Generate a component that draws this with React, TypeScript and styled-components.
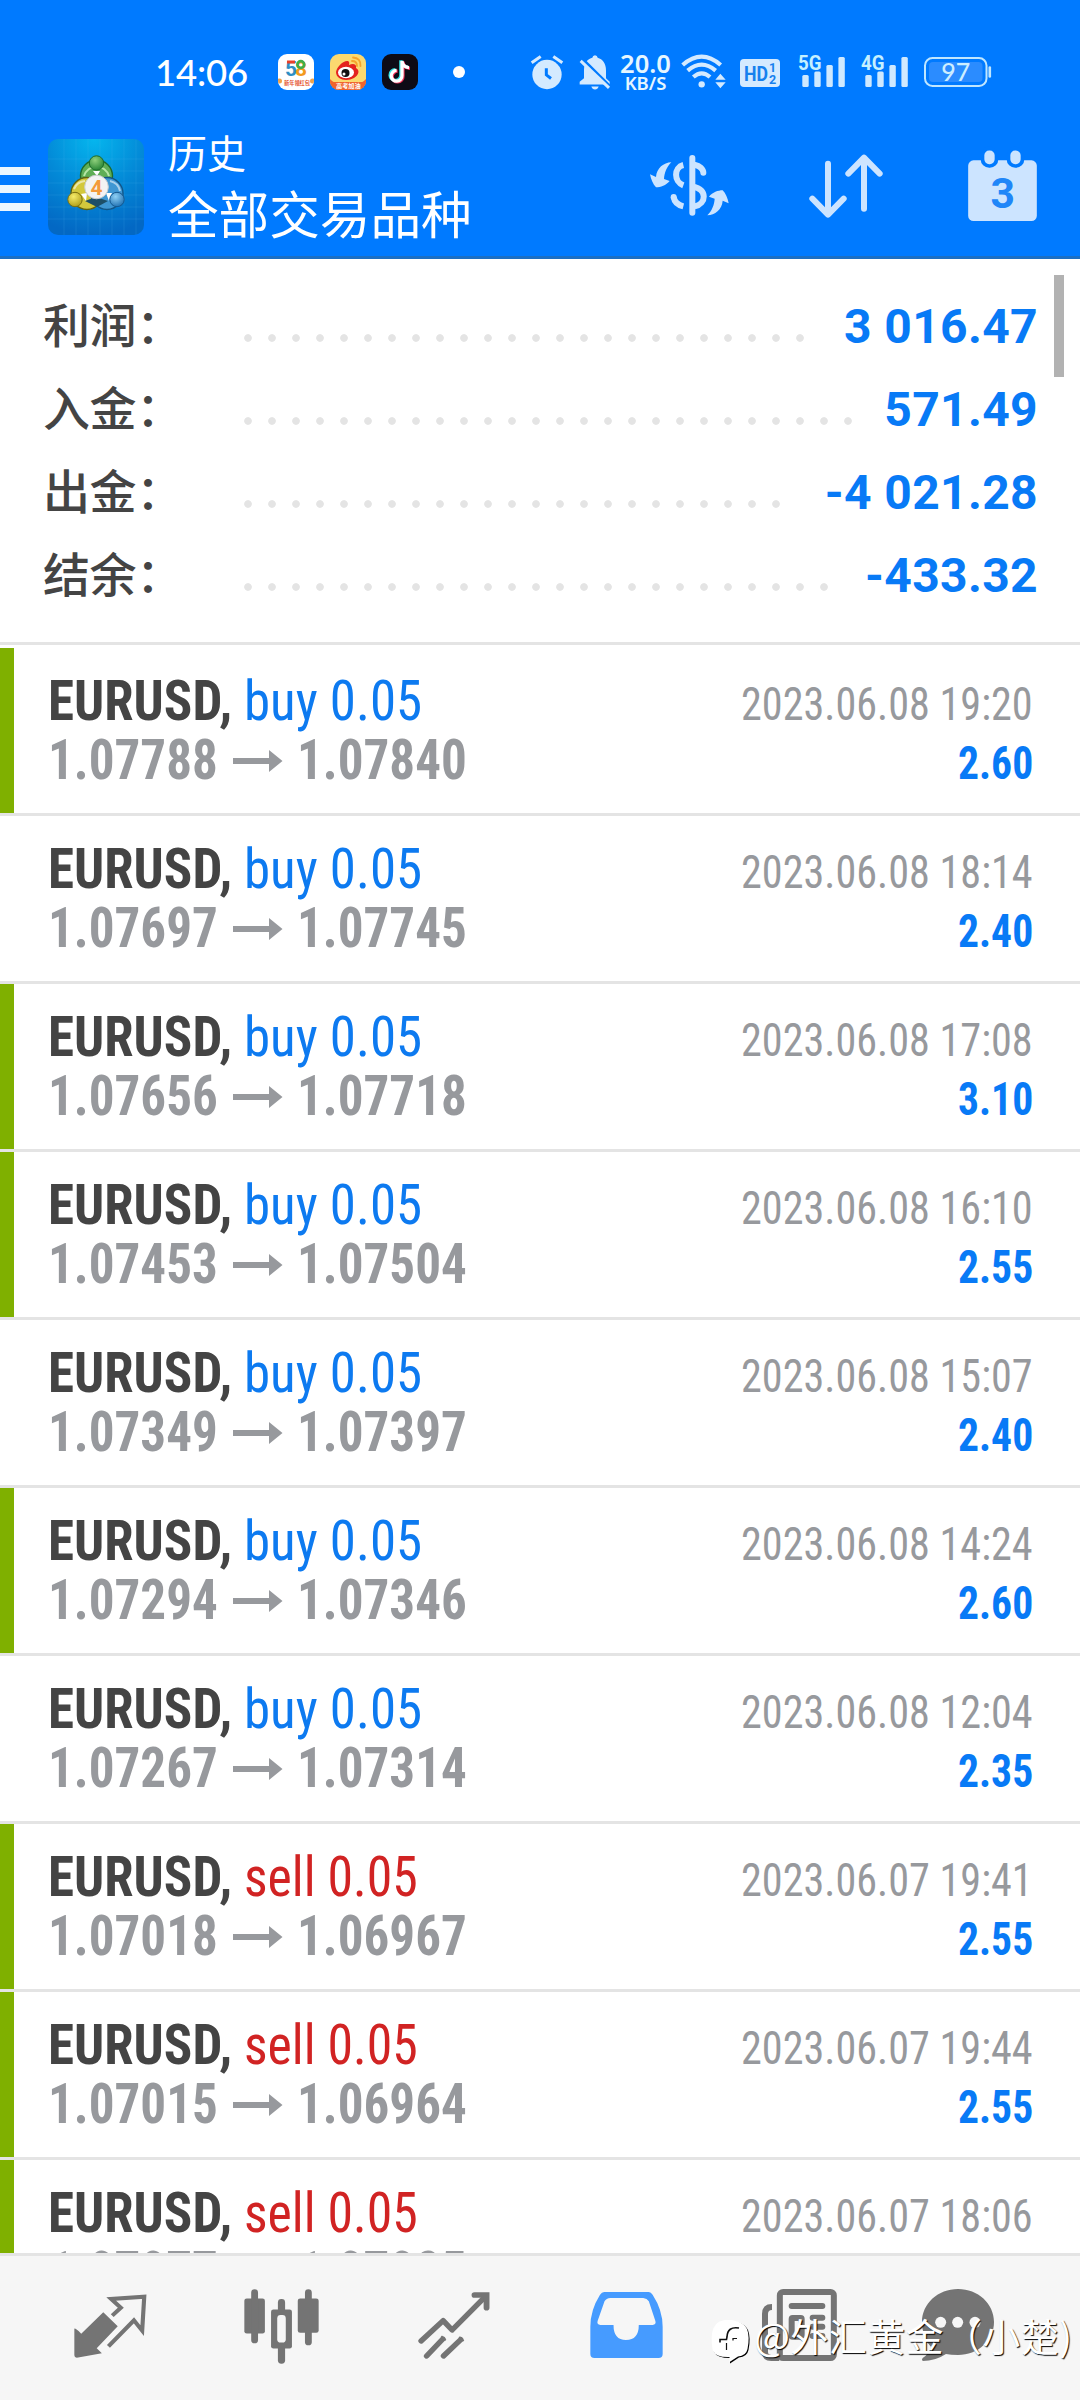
import React, { useLayoutEffect, useRef, useState } from "react";
import styled, { createGlobalStyle } from "styled-components";

const GlobalStyle = createGlobalStyle`
  * { box-sizing: border-box; }
  body { margin: 0; background: #fff; }
  svg { display: block; flex: none; overflow: visible; }
`;

const cjk = `"Noto Sans CJK SC", sans-serif`;
const roboto = `Roboto, "Noto Sans CJK SC", sans-serif`;
const condensed = `"Roboto Condensed", Roboto, sans-serif`;

const Screen = styled.main`
  position: relative;
  width: 1080px;
  height: 2400px;
  overflow: hidden;
  display: flex;
  flex-direction: column;
  background: #fff;
  font-family: ${roboto};
`;

const Header = styled.header`
  flex: none;
  height: 259px;
  background: #007aff;
  border-bottom: 3px solid #1b6fc4;
  color: #fff;
`;

/* ---------- status bar ---------- */

const StatusBar = styled.div`
  height: 120px;
  padding: 54px 0 0 155px;
  display: flex;
  align-items: flex-start;
`;

const Clock = styled.span`
  width: 123px;
  font: 500 36.5px/37px Lato, sans-serif;
  letter-spacing: -0.2px;
`;

const StatusItem = styled.div<{ $gap: number; $top?: number }>`
  flex: none;
  margin-left: ${(p) => p.$gap}px;
  margin-top: ${(p) => p.$top ?? 0}px;
`;

const AppTile = styled.div<{ $bg: string }>`
  width: 36px;
  height: 36px;
  border-radius: 9px;
  overflow: hidden;
  background: ${(p) => p.$bg};
`;

const Dot = styled.div`
  width: 12px;
  height: 12px;
  border-radius: 50%;
  background: #fff;
`;

const Speed = styled.div`
  width: 51px;
  display: flex;
  flex-direction: column;
  align-items: center;
  color: #e6f6ff;
  font: 600 25.5px/19px "Noto Sans", sans-serif;
  white-space: nowrap;
`;

const SpeedUnit = styled.div`
  font-size: 18.5px;
  line-height: 19px;
`;

/* ---------- toolbar ---------- */

const Toolbar = styled.div`
  height: 136px;
  display: flex;
  align-items: flex-start;
`;

const Hamburger = styled.div`
  width: 30px;
  margin-top: 47px;
  display: flex;
  flex-direction: column;
  gap: 10px;
`;

const HamburgerLine = styled.i`
  height: 8px;
  background: #ebf6ff;
`;

const Logo = styled.div`
  flex: none;
  width: 96px;
  height: 96px;
  margin: 19px 0 0 18px;
  border-radius: 10px;
  overflow: hidden;
`;

const Titles = styled.div`
  width: 480px;
  margin-left: 24px;
  padding-top: 3px;
  font-family: ${cjk};
`;

const Caption = styled.div`
  font-size: 39px;
  line-height: 56px;
`;

const Title = styled.div`
  font-size: 50.6px;
  line-height: 67px;
`;

const ToolIcon = styled.div<{ $gap: number; $top: number }>`
  flex: none;
  margin-left: ${(p) => p.$gap}px;
  margin-top: ${(p) => p.$top}px;
`;

/* ---------- summary ---------- */

const Summary = styled.section`
  flex: none;
  position: relative;
  height: 386px;
  padding: 26px 42px 0 43px;
  border-bottom: 3px solid #e4e4e4;
`;

const SummaryRow = styled.div`
  height: 83px;
  display: flex;
  align-items: center;
`;

const SummaryLabel = styled.span`
  width: 193px;
  padding-bottom: 7px;
  font: 500 47px/76px ${cjk};
  letter-spacing: -0.4px;
  color: #444;
`;

const Leader = styled.span<{ $count: number }>`
  width: ${(p) => p.$count * 24}px;
  height: 24px;
  margin-top: 23px;
  background: radial-gradient(circle at center, #e4e4e4 3.4px, transparent 4.2px) 0 0 / 24px 24px;
`;

const SummaryValue = styled.span`
  margin-left: auto;
  font: 700 48px/83px ${roboto};
  letter-spacing: 0.35px;
  color: #087af6;
`;

const ScrollThumb = styled.i`
  position: absolute;
  right: 16px;
  top: 16px;
  width: 10px;
  height: 102px;
  background: #b2b2b2;
`;

/* ---------- deals ---------- */

const DealList = styled.section`
  flex: 1;
  min-height: 0;
  overflow: hidden;
  padding-top: 3px;
`;

const DealRow = styled.article`
  height: 168px;
  display: flex;
  border-bottom: 3px solid #e4e4e4;
`;

const Marker = styled.i<{ $on: boolean }>`
  flex: none;
  width: 14px;
  background: ${(p) => (p.$on ? "#7fb000" : "transparent")};
`;

const DealMain = styled.div`
  flex: 1;
  padding: 24px 0 0 34px;
`;

const DealSide = styled.div`
  padding: 24px 47.4px 0 0;
  display: flex;
  flex-direction: column;
  align-items: flex-end;
`;

const Line = styled.div`
  height: 59px;
  display: flex;
  font: 400 55px/59px ${condensed};
`;

const Slot = styled.span<{ $w: number; $gap?: number }>`
  display: block;
  flex: none;
  width: ${(p) => p.$w}px;
  margin-left: ${(p) => p.$gap ?? 0}px;
`;

const Inner = styled.span`
  display: inline-block;
  white-space: nowrap;
  transform-origin: 0 50%;
`;

const Symbol = styled(Inner)`
  font-weight: 700;
  color: #444;
`;

const Order = styled(Inner)<{ $sell?: boolean }>`
  color: ${(p) => (p.$sell ? "#d12323" : "#0d7af0")};
`;

const Price = styled(Inner)`
  font-weight: 700;
  color: #97999d;
`;

const DateText = styled(Inner)`
  font-size: 45.5px;
  color: #97999d;
`;

const Profit = styled(Inner)`
  font-size: 45.5px;
  font-weight: 700;
  color: #087af6;
`;

const ArrowSvg = styled.svg`
  margin: 14px 0 0 15px;
`;

/* Squeezes a line of text horizontally so that it fills its slot. */
function Fit({
  as: Text,
  width,
  gap,
  children,
  ...rest
}: {
  as: React.ElementType;
  width: number;
  gap?: number;
  children: React.ReactNode;
  [key: string]: unknown;
}) {
  const ref = useRef<HTMLSpanElement>(null);
  const [scale, setScale] = useState(1);
  useLayoutEffect(() => {
    if (ref.current) setScale(width / ref.current.offsetWidth);
  }, [width]);
  return (
    <Slot $w={width} $gap={gap}>
      <Text ref={ref} style={{ transform: `scaleX(${scale})` }} {...rest}>
        {children}
      </Text>
    </Slot>
  );
}

/* ---------- bottom bar ---------- */

const BottomBar = styled.nav`
  flex: none;
  height: 147px;
  padding-left: 74px;
  display: flex;
  align-items: flex-start;
  background: #f6f6f6;
  border-top: 3px solid #e4e4e4;
`;

const NavItem = styled.div<{ $gap: number; $top: number }>`
  flex: none;
  margin-left: ${(p) => p.$gap}px;
  margin-top: ${(p) => p.$top}px;
`;

const Watermark = styled.div`
  position: absolute;
  left: 711px;
  top: 2310px;
  display: flex;
  white-space: nowrap;
  color: #fff;
  font: 400 38px/50px ${cjk};
  letter-spacing: 0.4px;
  text-shadow: 1px 1px 1px #000;
`;

const WatermarkLogo = styled.svg`
  margin: 10px 4px 0 0;
`;

/* ---------- drawings ---------- */

const pale = "#d4eaff";
const grey = "#747474";

const Tile58 = () => (
  <svg width="36" height="36" viewBox="0 0 36 36">
    <g fontFamily="Roboto, sans-serif" fontWeight="700" fontSize="21">
      <text x="7" y="22" fill="#2f8fc4">5</text>
      <text x="17" y="22" fill="#f39a1d">8</text>
    </g>
    <path d="M9 8H17" stroke="#e8402a" strokeWidth="3" />
    <circle cx="22.8" cy="10.5" r="3.4" fill="none" stroke="#3fae49" strokeWidth="2.6" />
    <text x="6" y="30.5" fontFamily="Noto Sans CJK SC, sans-serif" fontWeight="700" fontSize="5.2" fill="#e5502c">
      新年领红包
    </text>
    <circle cx="1.5" cy="27" r="2.5" fill="#f0a24a" />
    <circle cx="34.5" cy="27" r="2.5" fill="#f0a24a" />
  </svg>
);

const TileWeibo = () => (
  <svg width="36" height="36" viewBox="0 0 36 36">
    <rect y="28" width="36" height="8" fill="#f0642d" />
    <path d="M0 36V25Q4 30 10 28H26Q32 30 36 25V36Z" fill="#f0642d" />
    <path d="M6 18C7 12 14 6 18 7C20 8 19 10 19 11C23 9 27 10 26 14C30 16 29 21 24 24C17 28 6 26 6 18Z" fill="#e4231f" />
    <ellipse cx="16" cy="18.5" rx="8" ry="5.8" fill="#fff" />
    <circle cx="15.5" cy="19" r="4" fill="#111" />
    <circle cx="14" cy="20" r="1.5" fill="#fff" />
    <path d="M22 7Q27 7 27 12M23 3.5Q31 4 30.5 12" fill="none" stroke="#f5a32b" strokeWidth="1.8" strokeLinecap="round" />
    <text x="6" y="33.5" fontFamily="Noto Sans CJK SC, sans-serif" fontWeight="700" fontSize="6.2" fill="#fff">
      高考加油
    </text>
  </svg>
);

const TileTikTok = () => {
  const note = "M20 7V21.5A5.4 5.4 0 1 1 14.6 16.4M20 7C20.5 11 23 13.4 27 13.6";
  return (
    <svg width="36" height="36" viewBox="0 0 36 36" fill="none" strokeWidth="3.2">
      <path d={note} stroke="#35e0e2" transform="translate(-1.2 -0.8)" />
      <path d={note} stroke="#f0345c" transform="translate(1 0.8)" />
      <path d={note} stroke="#fff" />
    </svg>
  );
};

const Alarm = () => (
  <svg width="32" height="35" viewBox="93 75 96 104">
    <circle cx="141" cy="133" r="44" fill={pale} />
    <path d="M95 98L122 79M187 98L160 79" stroke={pale} strokeWidth="9" />
    <path d="M139 114V134L153 145" stroke="#007aff" strokeWidth="9" fill="none" />
  </svg>
);

const BellOff = () => (
  <svg width="31" height="35" viewBox="238 74 93 104">
    <path d="M252 162H240V154L253 143V118C253 96 266 84 278 82Q279 74 286 74T294 82C309 86 319 100 319 119V143L330 154V162Z" fill={pale} />
    <path d="M275 168H297Q294 177 286 177T275 168Z" fill={pale} />
    <path d="M247 84L333 170" stroke="#007aff" strokeWidth="9" />
    <path d="M243 91L328 172" stroke={pale} strokeWidth="9" />
  </svg>
);

const Wifi = () => (
  <svg width="45" height="35" viewBox="542 72 135 105">
    <g fill="none" stroke={pale} strokeWidth="12.5">
      <path d="M547 105Q604 55 661 105" />
      <path d="M562 122Q604 86 646 122" />
      <path d="M579 141Q604 119 629 141" />
    </g>
    <circle cx="604" cy="163" r="9.5" fill={pale} />
    <path d="M645 149L660 131L676 149ZM645 157L660 175L676 157Z" fill={pale} />
  </svg>
);

const HdBadge = () => (
  <svg width="40" height="28" viewBox="0 0 40 28">
    <rect width="40" height="28" rx="4" fill={pale} />
    <g fill="#1680ee" fontFamily="Roboto, sans-serif" fontWeight="700">
      <text x="4" y="21.5" fontSize="21" textLength="24" lengthAdjust="spacingAndGlyphs">HD</text>
      <text x="29" y="13" fontSize="12.5">1</text>
      <text x="29" y="25" fontSize="12.5">2</text>
    </g>
  </svg>
);

const Signal = ({ label }: { label: string }) => (
  <svg width="48" height="33" viewBox="0 0 48 33">
    <g fill="#cfe9ff">
      <rect x="4.3" y="21" width="6.4" height="12" rx="1.5" />
      <rect x="16.3" y="17.5" width="6.4" height="15.5" rx="1.5" />
      <rect x="28.4" y="11" width="6.4" height="22" rx="1.5" />
      <rect x="40.4" y="3" width="6.4" height="30" rx="1.5" />
    </g>
    <text x="0" y="16.4" fontFamily="Roboto, sans-serif" fontWeight="700" fontSize="21" textLength="23.5" lengthAdjust="spacingAndGlyphs" fill="#c5f0ff">
      {label}
    </text>
  </svg>
);

const Battery = () => (
  <svg width="68" height="30" viewBox="0 0 68 30">
    <rect x="1" y="1" width="61.5" height="28" rx="7.5" fill="none" stroke="#bfe6ff" strokeWidth="2" />
    <rect x="5" y="5" width="53.5" height="20" rx="4" fill="#2b8cff" />
    <path d="M65.8 10.5V19.5" stroke="#bfe6ff" strokeWidth="2.6" strokeLinecap="round" />
    <text x="31.8" y="24.2" fontFamily="Lato, sans-serif" fontWeight="500" fontSize="25" textAnchor="middle" fill="#cdeeff">
      97
    </text>
  </svg>
);

const LogoArt = () => (
  <svg width="96" height="96" viewBox="0 0 96 96">
    <defs>
      <radialGradient id="sky" cx="0.48" cy="0" r="1">
        <stop offset="0" stopColor="#05b6ee" />
        <stop offset="0.5" stopColor="#038bd8" />
        <stop offset="1" stopColor="#0368c4" />
      </radialGradient>
      <radialGradient id="green" cx="0.4" cy="0.3" r="0.8">
        <stop offset="0" stopColor="#8fd07c" />
        <stop offset="1" stopColor="#1d7c2c" />
      </radialGradient>
      <radialGradient id="gold" cx="0.4" cy="0.3" r="0.8">
        <stop offset="0" stopColor="#f5ec6a" />
        <stop offset="1" stopColor="#a8960f" />
      </radialGradient>
      <radialGradient id="blue" cx="0.4" cy="0.3" r="0.8">
        <stop offset="0" stopColor="#8fd0f5" />
        <stop offset="1" stopColor="#1668ac" />
      </radialGradient>
    </defs>
    <rect width="96" height="96" fill="url(#sky)" />
    <path
      d="M16 0V96M28 0V96M40 0V96M52 0V96M64 0V96M76 0V96M88 0V96M0 20H96M0 32H96M0 44H96M0 56H96M0 68H96M0 80H96"
      stroke="#5cc4f5"
      strokeOpacity="0.15"
      strokeWidth="1"
    />
    <g strokeWidth="1.4">
      <circle cx="48.5" cy="37" r="16" fill="#5fae56" stroke="#1f6b2c" />
      <circle cx="39" cy="54.5" r="16" fill="#d3c83c" stroke="#5f6212" />
      <circle cx="59" cy="54.5" r="16" fill="#3f97d3" stroke="#125687" />
    </g>
    <path d="M36 37A13 13 0 0 1 61 37" fill="none" stroke="#b5e6a5" strokeWidth="2" />
    <path d="M26 50A13 13 0 0 1 37 42M62 42A13 13 0 0 1 72 52" fill="none" stroke="#fff" strokeOpacity="0.55" strokeWidth="2" />
    <path d="M37 62L48 58L60 62L49 68Z" fill="#1d4f68" />
    <path d="M33 55L39 54L38 62ZM64 54L58 54L61 62ZM45 32H52L49 37Z" fill="#fff" />
    <circle cx="48.5" cy="24" r="7.2" fill="url(#green)" stroke="#1d6b2a" />
    <circle cx="27" cy="60.5" r="7.2" fill="url(#gold)" stroke="#7a7010" />
    <circle cx="69" cy="60.5" r="7.2" fill="url(#blue)" stroke="#16588f" />
    <circle cx="48.5" cy="48" r="11.8" fill="#f3f3f3" stroke="#c9cdcf" />
    <text x="48.5" y="55.5" fontFamily="Roboto, sans-serif" fontWeight="700" fontSize="21" textAnchor="middle" fill="#f39a3a">
      4
    </text>
  </svg>
);

const ExchangeIcon = () => {
  const arrow =
    "M156 126C133 127 112 143 110 170L92 162C95 178 101 192 110 201C124 201 140 195 151 182L134 176C135 158 142 140 156 126Z";
  return (
    <svg width="79" height="61" viewBox="92 104 237 183" fill="#cce4ff">
      <path d={arrow} />
      <path d={arrow} transform="rotate(180 210 205.5)" />
      <rect x="210" y="104" width="18" height="182" rx="9" />
      <g fill="none" stroke="#cce4ff" strokeWidth="18">
        <path d="M192 134C163 141 163 184 192 195" />
        <path d="M228 134C240 136 252 146 252 157" strokeLinecap="round" />
        <path d="M222 199C264 206 262 251 226 258" />
        <path d="M163 230C165 244 176 254 192 258" />
        <path d="M163 230V231" strokeLinecap="round" />
      </g>
    </svg>
  );
};

const SortIcon = () => (
  <svg width="74" height="64" viewBox="567 103 222 192" fill="none" stroke="#cce4ff" strokeWidth="18" strokeLinecap="round" strokeLinejoin="round">
    <path d="M624 132V284M577 237L624 285L671 237" />
    <path d="M732 267V114M685 162L732 114L779 162" />
  </svg>
);

const CalendarIcon = () => (
  <svg width="69" height="71" viewBox="1043 91 206 213">
    <rect x="1043" y="122" width="206" height="182" rx="16" fill="#cce4ff" />
    <g fill="#cce4ff" stroke="#007aff" strokeWidth="11">
      <rect x="1086" y="87" width="42" height="52" rx="20" />
      <rect x="1164" y="87" width="42" height="52" rx="20" />
    </g>
    <text x="1147" y="266" fontFamily="Roboto, sans-serif" fontWeight="700" fontSize="128" textAnchor="middle" fill="#2086f8">
      3
    </text>
  </svg>
);

const RowArrow = () => (
  <ArrowSvg width="50" height="30" viewBox="0 0 50 30">
    <path d="M0 13H36V5L49.5 16L36 27V19H0Z" fill="#97999d" />
  </ArrowSvg>
);

const TradeIcon = () => (
  <svg width="73" height="64" viewBox="214 493 212 192" preserveAspectRatio="none">
    <path d="M325 558L350 534L322 508L418 501L412 603L388 572L314 650" fill="none" stroke={grey} strokeWidth="12" />
    <path d="M299 548L341 590L280 656L295 671L222 684Q215 684 215 677V597Q218 595 235 612Z" fill={grey} />
  </svg>
);

const CandlesIcon = () => (
  <svg width="75" height="75" viewBox="708 476 219 224" preserveAspectRatio="none" fill={grey}>
    <rect x="709" y="504" width="60" height="105" rx="7" />
    <rect x="729" y="477" width="20" height="161" rx="10" />
    <rect x="865" y="504" width="61" height="103" rx="7" />
    <rect x="886" y="477" width="20" height="167" rx="10" />
    <rect x="807" y="506" width="21" height="193" rx="10" />
    <rect x="787" y="537" width="61" height="117" rx="7" />
    <rect x="805" y="554" width="25" height="82" rx="10" fill="#f6f6f6" />
  </svg>
);

const TrendIcon = () => (
  <svg width="72" height="67" viewBox="1212 485 209 201" preserveAspectRatio="none" fill="none" stroke={grey} strokeWidth="16" strokeLinecap="round">
    <path d="M1221 632L1285 571L1311 599L1408 498" strokeLinejoin="round" />
    <path d="M1376 494H1411V532" strokeWidth="17" />
    <path d="M1237 677L1284 626M1286 677L1336 628" />
    <path d="M1284 626L1288 622M1336 628L1340 624" strokeLinecap="butt" strokeWidth="18" />
  </svg>
);

const InboxIcon = () => (
  <svg width="73" height="66" viewBox="146 486 211 198" preserveAspectRatio="none">
    <path
      fillRule="evenodd"
      fill="#469bff"
      d="M187 486H316Q322 487 327 494Q356 540 356 590V672Q356 684 344 684H159Q147 684 147 672V590Q147 540 175 494Q180 487 187 486ZM205 504Q193 505 188 514L168 573Q165 584 176 585H214Q214 630 250 630Q287 630 287 585H327Q338 584 335 573L316 514Q311 505 300 504Z"
    />
  </svg>
);

const NewsIcon = () => (
  <svg width="75" height="72" viewBox="188 27 225 216" fill="none" stroke={grey}>
    <rect x="241.5" y="36" width="162" height="198" rx="10" strokeWidth="18" />
    <path d="M218 81Q197 81 197 102V216Q197 234 216 234H240" strokeWidth="18" />
    <path d="M277 78H369M340 113H369M340 140H369M340 168H369" strokeWidth="18" strokeLinecap="round" />
    <rect x="277" y="114" width="30" height="56" rx="3" strokeWidth="18" />
  </svg>
);

const ChatIcon = () => (
  <svg width="72" height="72" viewBox="666 27 216 216">
    <path d="M774 27C834 27 882 71 882 126S834 225 774 225Q752 225 738 222Q706 243 668 243Q664 239 668 234Q687 222 693 201Q666 172 666 126C666 71 714 27 774 27Z" fill={grey} />
    <g fill="#f6f6f6">
      <circle cx="722" cy="127" r="16.5" />
      <circle cx="773" cy="127" r="16.5" />
      <circle cx="825" cy="127" r="16.5" />
    </g>
  </svg>
);

const BrandMark = () => (
  <WatermarkLogo width="39" height="46" viewBox="0 0 39 46">
    <path d="M13 1.5C21 0 33 2 37 10Q40 18 37.5 30Q36 37 28 37.5L19 43.5L19 38Q6 38 3 32Q1 24 2 14Q4 3 13 1.5Z" fill="#000" />
    <path d="M12 0.5C20 -1 32 1 36 9Q39 17 36.5 29Q35 36 27 36.5L18.5 42L18.5 37Q5 37.5 2 31Q0 23 1 13Q3 2 12 0.5Z" fill="#fff" />
    <g fill="none" stroke="#111">
      <path d="M28 8Q16.5 6 16 17L15.5 19.5H9V22.5" strokeWidth="1.6" />
      <path d="M22 20.5V18.5H26M15.5 23V30" strokeWidth="1.2" />
    </g>
  </WatermarkLogo>
);

/* ---------- data ---------- */

const totals = [
  { label: "利润：", value: "3 016.47", dots: 24 },
  { label: "入金：", value: "571.49", dots: 26 },
  { label: "出金：", value: "-4 021.28", dots: 23 },
  { label: "结余：", value: "-433.32", dots: 25 },
];

const deals = [
  { side: "buy", open: "1.07788", close: "1.07840", time: "2023.06.08 19:20", profit: "2.60", tp: true },
  { side: "buy", open: "1.07697", close: "1.07745", time: "2023.06.08 18:14", profit: "2.40", tp: false },
  { side: "buy", open: "1.07656", close: "1.07718", time: "2023.06.08 17:08", profit: "3.10", tp: true },
  { side: "buy", open: "1.07453", close: "1.07504", time: "2023.06.08 16:10", profit: "2.55", tp: true },
  { side: "buy", open: "1.07349", close: "1.07397", time: "2023.06.08 15:07", profit: "2.40", tp: false },
  { side: "buy", open: "1.07294", close: "1.07346", time: "2023.06.08 14:24", profit: "2.60", tp: true },
  { side: "buy", open: "1.07267", close: "1.07314", time: "2023.06.08 12:04", profit: "2.35", tp: false },
  { side: "sell", open: "1.07018", close: "1.06967", time: "2023.06.07 19:41", profit: "2.55", tp: true },
  { side: "sell", open: "1.07015", close: "1.06964", time: "2023.06.07 19:44", profit: "2.55", tp: true },
  { side: "sell", open: "1.07077", close: "1.07025", time: "2023.06.07 18:06", profit: "2.60", tp: true },
];

export default function App() {
  return (
    <Screen>
      <GlobalStyle />
      <Header>
        <StatusBar>
          <Clock>14:06</Clock>
          <StatusItem $gap={0}><AppTile $bg="#fff"><Tile58 /></AppTile></StatusItem>
          <StatusItem $gap={16}><AppTile $bg="#fbd96f"><TileWeibo /></AppTile></StatusItem>
          <StatusItem $gap={16}><AppTile $bg="#0d0b16"><TileTikTok /></AppTile></StatusItem>
          <StatusItem $gap={35} $top={12}><Dot /></StatusItem>
          <StatusItem $gap={66} $top={1}><Alarm /></StatusItem>
          <StatusItem $gap={16} $top={1}><BellOff /></StatusItem>
          <StatusItem $gap={10}>
            <Speed>
              <span>20.0</span>
              <SpeedUnit>KB/S</SpeedUnit>
            </Speed>
          </StatusItem>
          <StatusItem $gap={10}><Wifi /></StatusItem>
          <StatusItem $gap={14} $top={5}><HdBadge /></StatusItem>
          <StatusItem $gap={18}><Signal label="5G" /></StatusItem>
          <StatusItem $gap={15}><Signal label="4G" /></StatusItem>
          <StatusItem $gap={15} $top={3}><Battery /></StatusItem>
        </StatusBar>
        <Toolbar>
          <Hamburger>
            <HamburgerLine />
            <HamburgerLine />
            <HamburgerLine />
          </Hamburger>
          <Logo><LogoArt /></Logo>
          <Titles>
            <Caption>历史</Caption>
            <Title>全部交易品种</Title>
          </Titles>
          <ToolIcon $gap={2} $top={35}><ExchangeIcon /></ToolIcon>
          <ToolIcon $gap={80} $top={34}><SortIcon /></ToolIcon>
          <ToolIcon $gap={85} $top={30}><CalendarIcon /></ToolIcon>
        </Toolbar>
      </Header>

      <Summary>
        {totals.map((t) => (
          <SummaryRow key={t.label}>
            <SummaryLabel>{t.label}</SummaryLabel>
            <Leader $count={t.dots} />
            <SummaryValue>{t.value}</SummaryValue>
          </SummaryRow>
        ))}
        <ScrollThumb />
      </Summary>

      <DealList>
        {deals.map((d) => (
          <DealRow key={d.time}>
            <Marker $on={d.tp} />
            <DealMain>
              <Line>
                <Fit as={Symbol} width={184}>EURUSD,</Fit>
                <Fit as={Order} width={d.side === "buy" ? 178 : 174} gap={11.5} $sell={d.side === "sell"}>
                  {d.side} 0.05
                </Fit>
              </Line>
              <Line>
                <Fit as={Price} width={170}>{d.open}</Fit>
                <RowArrow />
                <Fit as={Price} width={170} gap={14}>{d.close}</Fit>
              </Line>
            </DealMain>
            <DealSide>
              <Line><Fit as={DateText} width={292}>{d.time}</Fit></Line>
              <Line><Fit as={Profit} width={75}>{d.profit}</Fit></Line>
            </DealSide>
          </DealRow>
        ))}
      </DealList>

      <BottomBar>
        <NavItem $gap={0} $top={38}><TradeIcon /></NavItem>
        <NavItem $gap={97} $top={33}><CandlesIcon /></NavItem>
        <NavItem $gap={99} $top={36}><TrendIcon /></NavItem>
        <NavItem $gap={100} $top={36}><InboxIcon /></NavItem>
        <NavItem $gap={99} $top={33}><NewsIcon /></NavItem>
        <NavItem $gap={85} $top={33}><ChatIcon /></NavItem>
      </BottomBar>

      <Watermark>
        <BrandMark />
        @外汇黄金（小楚)
      </Watermark>
    </Screen>
  );
}
